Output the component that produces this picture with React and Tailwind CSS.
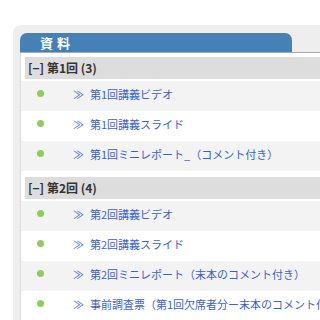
import React from "react";

const groups = [
  {
    title: "[−] 第1回 (3)",
    items: ["第1回講義ビデオ", "第1回講義スライド", "第1回ミニレポート_（コメント付き）"],
  },
  {
    title: "[−] 第2回 (4)",
    items: [
      "第2回講義ビデオ",
      "第2回講義スライド",
      "第2回ミニレポート（末本のコメント付き）",
      "事前調査票（第1回欠席者分ー末本のコメント付き）",
    ],
  },
];

function Row({ text, gray }) {
  return (
    <div className={`flex h-[30px] items-start pt-[5px] whitespace-nowrap ${gray ? "bg-[#f3f3f3]" : "bg-white"}`}>
      <span className="block shrink-0 ml-[16px] mt-[4px] w-[7px] h-[7px] rounded-full bg-[#8bcf5a]" />
      <span className="shrink-0 ml-[29px] text-[11px] leading-[16px] text-[#3a62c6]">
        <span className="mr-[6px]">≫</span>
        {text}
      </span>
    </div>
  );
}

export default function App() {
  return (
    <div
      className="w-[320px] h-[320px] overflow-hidden bg-white"
      style={{ fontFamily: '"Noto Sans CJK JP", "Liberation Sans", sans-serif' }}
    >
      <div className="ml-[13px] mt-[25px] w-[340px] h-[320px] bg-[#eeeeee] rounded-tl-[8px] pl-[7px] pt-[8px]">
        <div className="w-[272px] h-[19px] bg-[#4681b6] rounded-t-[7px] flex items-center">
          <span className="ml-[20px] text-white font-bold text-[13px] tracking-[4px] leading-none">資料</span>
        </div>
        <div className="h-[1px] bg-[#a9a9a9]" />
        <div className="bg-white border-l border-[#dcdcdc] pt-[4px] overflow-hidden">
          {groups.map((g, gi) => (
            <div key={gi} className={gi > 0 ? "mt-[6px]" : ""}>
              <div className="ml-[4px] h-[22px] bg-[#dddddd] flex items-center pl-[3px]">
                <span className="text-[12px] font-bold text-[#333333] leading-none">{g.title}</span>
              </div>
              <div className="mt-[2px]">
                {g.items.map((t, i) => (
                  <Row key={i} text={t} gray={i % 2 === 0} />
                ))}
              </div>
            </div>
          ))}
        </div>
      </div>
    </div>
  );
}
